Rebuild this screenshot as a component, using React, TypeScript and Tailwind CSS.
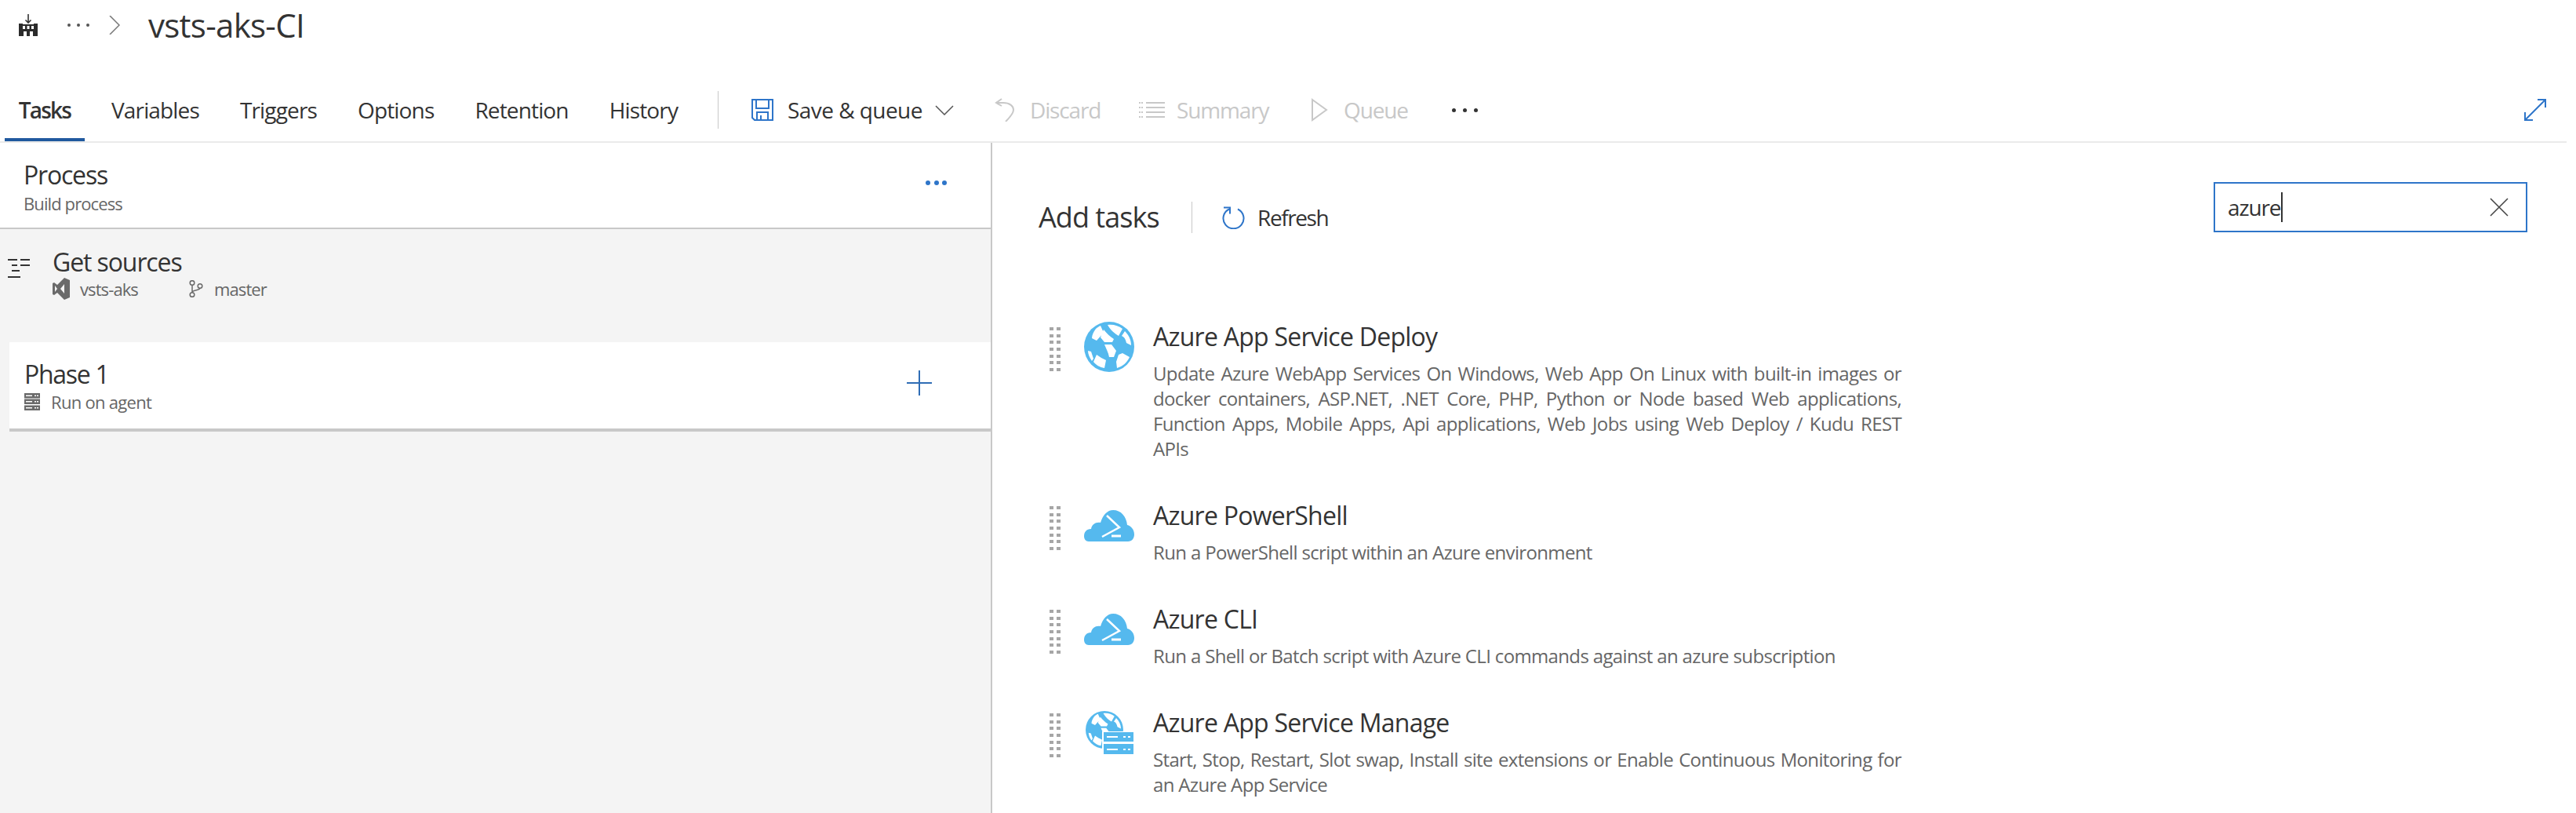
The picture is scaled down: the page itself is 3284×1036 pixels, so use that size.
import type { ReactNode } from 'react';

const BLUE = '#2e75c9';
const SKY = '#55b9ee';

function BuildIcon() {
  return (
    <svg width="24" height="28" viewBox="0 0 24 28" className="shrink-0">
      <path d="M12 0v11M8.500 7.500 12 11l3.500-3.500" fill="none" stroke="#333" strokeWidth="1.600" />
      <path d="M0 12h5v1h14v-1h5v16H0z" fill="#2b2b2b" />
      <path d="M5 15h3v4H5zM10.500 15h3v4h-3zM16 15h3v4h-3zM6 22h4v6H6zM14 22h4v6h-4z" fill="#fff" />
    </svg>
  );
}

function SaveIcon() {
  return (
    <svg width="28" height="28" viewBox="0 0 28 28" fill="none" stroke={BLUE} strokeWidth="2" className="shrink-0">
      <path d="M1 1h26v26H4l-3-3z" />
      <path d="M6 1v11h16V1M7 27v-10h14v10M12 21v6" />
    </svg>
  );
}

function DiscardIcon() {
  return (
    <svg width="26" height="30" viewBox="0 0 26 30" fill="none" stroke="#c8c8c8" strokeWidth="2" className="shrink-0">
      <path d="M9 1 2 6l7 4" />
      <path d="M3 6h8c8 0 13 4 13 9 0 4-4 9-10 15" />
    </svg>
  );
}

function SummaryIcon() {
  return (
    <svg width="33" height="24" viewBox="0 0 33 24" stroke="#c8c8c8" strokeWidth="2" className="shrink-0">
      <path d="M9 3h24M9 9h24M9 15h24M9 21h24" />
      <path d="M0 3h5M0 9h5M0 15h5M0 21h5" strokeDasharray="2 1" />
    </svg>
  );
}

function PlayIcon() {
  return (
    <svg width="21" height="30" viewBox="0 0 21 30" fill="none" stroke="#c8c8c8" strokeWidth="2" className="shrink-0">
      <path d="M1 2 19 15 1 28z" />
    </svg>
  );
}

function ExpandIcon() {
  return (
    <svg width="28" height="28" viewBox="0 0 28 28" fill="none" stroke={BLUE} strokeWidth="2" className="shrink-0">
      <path d="M1 27 27 1M17 1h10v10M1 17v10h10" />
    </svg>
  );
}

function RefreshIcon() {
  return (
    <svg width="29" height="30" viewBox="0 0 29 30" fill="none" stroke={BLUE} strokeWidth="2" className="shrink-0">
      <path d="M9 4.500A13 13 0 1 0 20 4.500" />
      <path d="M2 2.500h8v8" />
    </svg>
  );
}

function GetSourcesIcon() {
  return (
    <svg width="28" height="24" viewBox="0 0 28 24" stroke="#333" strokeWidth="2" className="shrink-0">
      <path d="M0 1h12M16 1h12M5 8h7M16 8h12M5 15h10M0 23h16" />
    </svg>
  );
}

function VsIcon() {
  return (
    <svg width="22" height="28" viewBox="0 0 22 28" fill="#6a6a6a" className="shrink-0">
      <path d="M15 0l7 3v22l-7 3-9-9-4 3-2-1V7l2-1 4 3zM15 8l-5 6 5 6zM3 10v8l3-4z" fillRule="evenodd" />
    </svg>
  );
}

function BranchIcon() {
  return (
    <svg width="18" height="22" viewBox="0 0 18 22" fill="none" stroke="#6a6a6a" strokeWidth="1.500" className="shrink-0">
      <circle cx="4" cy="3.500" r="2.800" />
      <circle cx="4" cy="18.500" r="2.800" />
      <circle cx="14" cy="7.500" r="2.800" />
      <path d="M4 6.300v9.400M14 10.300c0 3-10 2-10 5.400" />
    </svg>
  );
}

function AgentIcon() {
  return (
    <svg width="20" height="22" viewBox="0 0 20 22" className="shrink-0">
      <path d="M0 0h20v6.500H0zM0 7.500h20V14H0zM0 15.500h20V22H0z" fill="#6a6a6a" />
      <path d="M2 2.500h8v1.500H2zM2 10h8v1.500H2zM2 18h8v1.500H2zM13 2.500h2v1.500h-2zM16 2.500h2v1.500h-2zM13 10h2v1.500h-2zM16 10h2v1.500h-2zM13 18h2v1.500h-2zM16 18h2v1.500h-2z" fill="#fff" />
    </svg>
  );
}

// Blue disc with the white cells of the globe cut out of it, on a 64 box.
function GlobeBody() {
  return (
    <>
      <circle cx="32" cy="32" r="32" fill={SKY} />
      <path
        d="M15 9c2-2 4-3 6-4l4 9-9 10-6-3c0-4 2-8 5-12zM30 4c7-1 14 1 19 5l-5 9C39 15 34 11 30 4zM25 10c4 5 8 9 13 12l-2 4H26l-5-6zM52 12c5 5 8 11 8 18l-6-3c-1-5-3-8-6-9zM26 29h9l6 8-3 8h-6c-1-6-4-11-6-16zM5 37l4 1 3 9-2 3C7 46 5 41 5 37zM16 42c4 3 8 5 12 7l-2 10c-6-1-11-4-14-8zM44 42l5-2 9 5c-3 7-9 12-16 14l-1-8z"
        fill="#fff"
      />
    </>
  );
}

function GlobeIcon() {
  return (
    <svg width="64" height="64" viewBox="0 0 64 64" className="shrink-0">
      <GlobeBody />
    </svg>
  );
}

function CloudIcon() {
  return (
    <svg width="64" height="40" viewBox="0 0 64 40" className="shrink-0">
      <path d="M6 40C2 40 0 37 0 33c0-5 3-9 9-9 1-6 6-9 12-8C24 6 30 0 37 0c10 0 17 8 18 19 5 1 9 6 9 12 0 5-3 9-8 9z" fill={SKY} />
      <path d="M29 7 45 22 23 34" fill="none" stroke="#fff" strokeWidth="2.500" />
      <path d="M35 33h12" stroke="#fff" strokeWidth="3" />
    </svg>
  );
}

function ManageIcon() {
  return (
    <svg width="64" height="56" viewBox="0 0 64 56" className="shrink-0">
      <g transform="translate(2 0) scale(0.750)">
        <GlobeBody />
      </g>
      <path d="M23 26h41v30H23z" fill="#fff" />
      <path d="M25 27h38v12H25zM25 42h38v13H25z" fill={SKY} />
      <path d="M29 32h14v2H29zM29 48h14v2H29zM50 32h3v2h-3zM56 32h3v2h-3zM50 48h3v2h-3zM56 48h3v2h-3z" fill="#fff" />
    </svg>
  );
}

function GripDots() {
  return (
    <div className="grid w-[14px] shrink-0 grid-cols-2 gap-x-[4px] gap-y-[4.670px]">
      {Array.from({ length: 14 }).map((_, i) => (
        <span key={i} className="h-[4px] w-[5px] bg-[#a6a6a6]" />
      ))}
    </div>
  );
}

function Dots({ color, size, gap }: { color: string; size: string; gap: string }) {
  return (
    <span className={`flex items-center ${gap}`}>
      {[0, 1, 2].map((i) => (
        <span key={i} className={`${size} rounded-full`} style={{ backgroundColor: color }} />
      ))}
    </span>
  );
}

interface TabProps {
  label: string;
  active?: boolean;
}

function Tab({ label, active }: TabProps) {
  return (
    <div
      className={`flex items-center border-y-4 border-t-transparent text-[28px] leading-[40px] text-[#333] ${
        active
          ? 'w-[102px] justify-center border-b-[#20599e] font-semibold tracking-[-1.800px]'
          : 'border-b-transparent px-[18px] tracking-[-0.850px]'
      }`}
    >
      {label}
    </div>
  );
}

interface ToolItemProps {
  icon: ReactNode;
  label: string;
  width: string;
  gap: string;
  disabled?: boolean;
}

function ToolItem({ icon, label, width, gap, disabled }: ToolItemProps) {
  return (
    <div className={`flex items-center ${width} ${gap}`}>
      {icon}
      <span
        className={`text-[28px] leading-[40px] ${
          disabled ? 'tracking-[-1.150px] text-[#c8c8c8]' : 'tracking-[-0.550px] text-[#333]'
        }`}
      >
        {label}
      </span>
    </div>
  );
}

interface TaskProps {
  icon: ReactNode;
  iconClass: string;
  title: string;
  description: string;
}

const TASKS: TaskProps[] = [
  {
    icon: <GlobeIcon />,
    iconClass: 'mt-[1px]',
    title: 'Azure App Service Deploy',
    description:
      'Update Azure WebApp Services On Windows, Web App On Linux with built-in images or docker containers, ASP.NET, .NET Core, PHP, Python or Node based Web applications, Function Apps, Mobile Apps, Api applications, Web Jobs using Web Deploy / Kudu REST APIs',
  },
  {
    icon: <CloudIcon />,
    iconClass: 'mt-[13px]',
    title: 'Azure PowerShell',
    description: 'Run a PowerShell script within an Azure environment',
  },
  {
    icon: <CloudIcon />,
    iconClass: 'mt-[13px]',
    title: 'Azure CLI',
    description: 'Run a Shell or Batch script with Azure CLI commands against an azure subscription',
  },
  {
    icon: <ManageIcon />,
    iconClass: 'mt-[5px]',
    title: 'Azure App Service Manage',
    description:
      'Start, Stop, Restart, Slot swap, Install site extensions or Enable Continuous Monitoring for an Azure App Service',
  },
];

function TaskRow({ icon, iconClass, title, description }: TaskProps) {
  return (
    <div className="flex">
      <div className="mt-[8px] w-[44px] shrink-0">
        <GripDots />
      </div>
      <div className={`w-[88px] shrink-0 ${iconClass}`}>{icon}</div>
      <div className="w-[954px]">
        <div className="text-[32px] leading-[40px] tracking-[-0.750px] text-[#333]">{title}</div>
        <p className="mt-[11px] text-justify text-[24px] leading-[32px] tracking-[-0.650px] text-[#666]">
          {description}
        </p>
      </div>
    </div>
  );
}

export default function App() {
  return (
    <div className="flex h-[1036px] w-[3284px] flex-col overflow-hidden bg-white font-['Open_Sans','Noto_Sans',sans-serif]">
      <header className="flex h-[64px] items-center pl-[24px]">
        <BuildIcon />
        <span className="ml-[38px]">
          <Dots color="#555" size="h-[4px] w-[4px]" gap="gap-[8px]" />
        </span>
        <svg width="14" height="24" viewBox="0 0 14 24" fill="none" stroke="#777" strokeWidth="1.500" className="ml-[25px]">
          <path d="M1 0l12 12L1 24" />
        </svg>
        <h1 className="ml-[36px] text-[42px] font-normal leading-[48px] tracking-[-0.700px] text-[#333]">vsts-aks-CI</h1>
      </header>

      <nav className="mr-[12px] mt-[36px] flex h-[82px] shrink-0 items-stretch border-b-2 border-[#eaeaea]">
        <div className="flex w-[909px] gap-[16px] pl-[6px]">
          <Tab label="Tasks" active />
          <Tab label="Variables" />
          <Tab label="Triggers" />
          <Tab label="Options" />
          <Tab label="Retention" />
          <Tab label="History" />
        </div>
        <div className="my-[16px] ml-[6px] w-[1px] bg-[#c8c8c8]" />
        <div className="ml-[42px] flex items-center">
          <ToolItem icon={<SaveIcon />} label="Save & queue" width="w-[234px]" gap="gap-[18px]" />
          <svg width="24" height="13" viewBox="0 0 24 13" fill="none" stroke="#555" strokeWidth="1.500" className="mr-[52px]">
            <path d="M1 1l11 11L23 1" />
          </svg>
          <ToolItem icon={<DiscardIcon />} label="Discard" width="w-[184px]" gap="gap-[19px]" disabled />
          <ToolItem icon={<SummaryIcon />} label="Summary" width="w-[220px]" gap="gap-[15px]" disabled />
          <ToolItem icon={<PlayIcon />} label="Queue" width="w-[179px]" gap="gap-[20px]" disabled />
          <Dots color="#333" size="h-[5px] w-[5px]" gap="gap-[9px]" />
        </div>
        <div className="ml-auto mr-[26px] flex items-center">
          <ExpandIcon />
        </div>
      </nav>

      <main className="flex min-h-0 flex-1">
        <aside className="w-[1265px] shrink-0 border-r-2 border-[#c8c8c8] bg-[#f4f4f4]">
          <section className="flex h-[110px] items-start justify-between border-b-2 border-[#c8c8c8] bg-white pl-[30px] pr-[56px] pt-[21px]">
            <div>
              <div className="text-[32px] leading-[40px] tracking-[-1.200px] text-[#333]">Process</div>
              <div className="mt-[2px] text-[22px] leading-[28px] tracking-[-0.900px] text-[#666]">Build process</div>
            </div>
            <span className="mt-[27px]">
              <Dots color={BLUE} size="h-[6px] w-[6px]" gap="gap-[4.500px]" />
            </span>
          </section>

          <section className="flex pl-[10px] pt-[22px]">
            <div className="mt-[16px] w-[57px]">
              <GetSourcesIcon />
            </div>
            <div>
              <div className="text-[32px] leading-[40px] tracking-[-1.100px] text-[#333]">Get sources</div>
              <div className="flex h-[28px] items-center text-[22px] leading-[28px] tracking-[-0.900px] text-[#666]">
                <VsIcon />
                <span className="ml-[13px] w-[139px]">vsts-aks</span>
                <BranchIcon />
                <span className="ml-[14px]">master</span>
              </div>
            </div>
          </section>

          <section className="ml-[12px] mt-[54px] flex h-[114px] items-start justify-between border-b-4 border-[#c8c8c8] bg-white pl-[19px] pr-[75px] pt-[21px]">
            <div>
              <div className="text-[32px] leading-[40px] tracking-[-1.300px] text-[#333]">Phase 1</div>
              <div className="mt-[1px] flex h-[28px] items-center gap-[14px] text-[22px] leading-[28px] tracking-[-0.700px] text-[#666]">
                <AgentIcon />
                <span>Run on agent</span>
              </div>
            </div>
            <svg width="32" height="32" viewBox="0 0 32 32" stroke="#2f6db5" strokeWidth="2" className="mt-[15px]">
              <path d="M16 0v32M0 16h32" />
            </svg>
          </section>
        </aside>

        <section className="min-w-0 flex-1 pl-[59px] pr-[62px] pt-[50px]">
          <div className="flex items-start">
            <div className="mt-[25px] flex h-[40px] items-center">
              <span className="w-[195px] text-[36px] leading-[40px] tracking-[-0.950px] text-[#333]">Add tasks</span>
              <span className="h-[40px] w-[1px] bg-[#c8c8c8]" />
              <span className="ml-[38px]">
                <RefreshIcon />
              </span>
              <span className="ml-[16px] text-[28px] leading-[40px] tracking-[-1.400px] text-[#333]">Refresh</span>
            </div>
            <div className="ml-auto flex h-[64px] w-[400px] items-center border-2 border-[#2e75c9] pl-[16px] pr-[22px]">
              <span className="text-[28px] leading-[40px] tracking-[-1.150px] text-[#333]">azure</span>
              <span className="ml-[1px] h-[38px] w-[2px] bg-[#333]" />
              <svg width="24" height="24" viewBox="0 0 24 24" stroke="#444" strokeWidth="1.500" className="ml-auto">
                <path d="M1 1l22 22M23 1 1 23" />
              </svg>
            </div>
          </div>

          <div className="mt-[112px] flex flex-col gap-[49px] pl-[14px]">
            {TASKS.map((task) => (
              <TaskRow key={task.title} {...task} />
            ))}
          </div>
        </section>
      </main>
    </div>
  );
}
